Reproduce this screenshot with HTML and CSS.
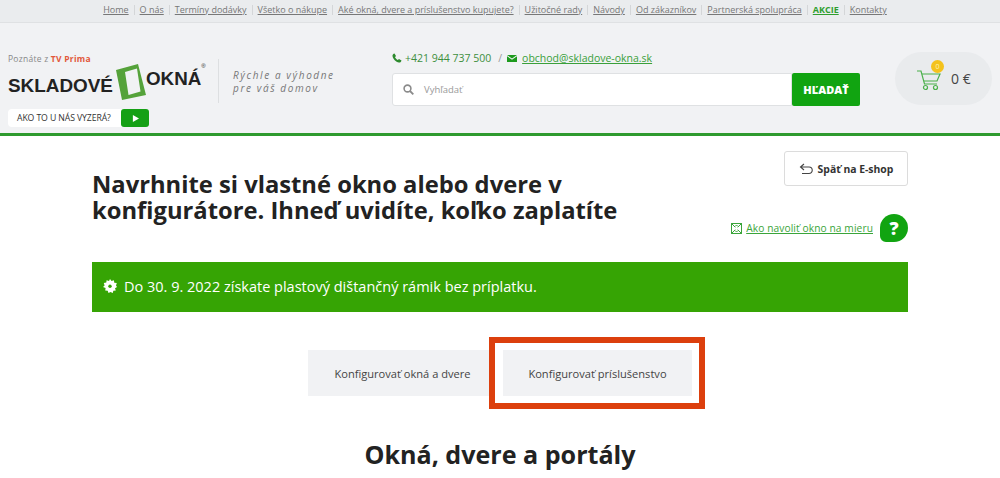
FILE: index.html
```html
<!DOCTYPE html>
<html lang="sk">
<head>
<meta charset="utf-8">
<title>Skladové okná</title>
<link rel="stylesheet" href="styles.css">
</head>
<body>
<nav class="topbar">
  <a href="#">Home</a><a href="#">O nás</a><a href="#">Termíny dodávky</a><a href="#">Všetko o nákupe</a><a href="#">Aké okná, dvere a príslušenstvo kupujete?</a><a href="#">Užitočné rady</a><a href="#">Návody</a><a href="#">Od zákazníkov</a><a href="#">Partnerská spolupráca</a><a href="#" class="akcie">AKCIE</a><a href="#">Kontakty</a>
</nav>
<header class="header">
  <div class="brand">
    <div class="known">Poznáte z <b>TV Prima</b></div>
    <div class="logo">
      <span class="logo-a">SKLADOVÉ</span>
      <svg class="logo-frame" width="30" height="36" viewBox="0 0 30 36"><path fill-rule="evenodd" d="M0 6 22 0 30 31 6 36Z M9 8 21 4.500 24.500 27.500 12.500 31Z" fill="#55a23a"/></svg>
      <span class="logo-b">OKNÁ<sup>®</sup></span>
    </div>
    <div class="video"><span class="video-label">AKO TO U NÁS VYZERÁ?</span><span class="video-play"><svg width="7" height="7" viewBox="0 0 8 8"><path d="M1 0 8 4 1 8Z" fill="#fff"/></svg></span></div>
  </div>
  <div class="slogan">Rýchle a výhodne<br>pre váš domov</div>
  <div class="contact">
    <div class="contact-row">
      <svg width="10" height="10" viewBox="0 0 10 10"><path d="M2.500.5 4 3 3 4.200C3.600 5.400 4.600 6.400 5.800 7L7 6l2.500 1.500C9.200 8.800 8.200 9.700 7 9.500 3.800 9 1 6.200.5 3 .3 1.800 1.200.8 2.500.5Z" fill="#2d8a2d"/></svg>
      <span class="phone">+421 944 737 500</span>
      <span class="slash">/</span>
      <svg width="10" height="7" viewBox="0 0 10 7"><path d="M0 0h10L5 3.500Z M0 1.200 5 4.800 10 1.200V7H0Z" fill="#1d9a1d"/></svg>
      <a href="#" class="mail">obchod@skladove-okna.sk</a>
    </div>
    <form class="search">
      <div class="search-field">
        <svg width="11" height="11" viewBox="0 0 11 11"><circle cx="4.500" cy="4.500" r="3.400" fill="none" stroke="#8b8b8b" stroke-width="1.600"/><path d="M7 7l3.300 3.300" stroke="#8b8b8b" stroke-width="1.800"/></svg>
        <span class="placeholder">Vyhľadať</span>
      </div>
      <button class="search-btn" type="button">HĽADAŤ</button>
    </form>
  </div>
  <div class="cart">
    <span class="cart-icon">
      <svg width="26" height="22" viewBox="0 0 26 22"><g fill="none" stroke="#4bb04b" stroke-width="1.200"><path d="M1 2h4l3.500 13H21"/><path d="M6 5h18l-3 7H8"/><circle cx="9.500" cy="18.500" r="2"/><circle cx="19.500" cy="18.500" r="2"/></g></svg>
      <span class="cart-badge">0</span>
    </span>
    <span class="cart-sum">0 €</span>
  </div>
</header>
<main class="main">
  <div class="title-row">
    <h1>Navrhnite si vlastné okno alebo dvere v konfigurátore. Ihneď uvidíte, koľko zaplatíte</h1>
    <div class="side">
      <a href="#" class="back">
        <svg width="14" height="12" viewBox="0 0 14 12"><path d="M5 1 1.500 4 5 7M1.500 4H10a3 3 0 0 1 0 6.500H3" fill="none" stroke="#444" stroke-width="1.100"/></svg>
        Späť na E-shop
      </a>
      <div class="help">
        <svg width="11" height="11" viewBox="0 0 11 11"><g fill="none" stroke="#3aa53a" stroke-width="1"><rect x=".5" y=".5" width="10" height="10"/><path d="M1 1l3.300 3.300M10 1 6.700 4.300M1 10l3.300-3.300M10 10 6.700 6.700M4 3.500 5.500 2 7 3.500M4 7.500 5.500 9 7 7.500"/></g></svg>
        <a href="#" class="help-link">Ako navoliť okno na mieru</a>
        <span class="help-bubble">?</span>
      </div>
    </div>
  </div>
  <div class="notice">
    <svg width="14" height="14" viewBox="0 0 14 14"><path d="M7 0l1.500 2 2.400-.8.400 2.500 2.500.4-.8 2.400L14 8l-2 1.300.8 2.200-2.500.3-.5 2.200L7.500 13 5.500 14l-.8-2.200-2.500-.2.400-2.500L0 8l1.600-1.600L.8 4l2.500-.4.300-2.400L6 2Z" fill="#fff"/><circle cx="7" cy="7.300" r="1.700" fill="#36a404"/></svg>
    Do 30. 9. 2022 získate plastový dištančný rámik bez príplatku.
  </div>
  <div class="tabs">
    <a href="#" class="tab tab-first">Konfigurovať okná a dvere</a>
    <div class="highlight"><a href="#" class="tab tab-second">Konfigurovať príslušenstvo</a></div>
  </div>
  <h2>Okná, dvere a portály</h2>
</main>
</body>
</html>
```
FILE: styles.css
```css
* { box-sizing: border-box; }
html, body { margin: 0; padding: 0; }
body { width: 1000px; height: 478px; overflow: hidden; background: #fff; font-family: "Open Sans", sans-serif; color: #222; }
a { color: inherit; }

.topbar { height: 23px; background: #eaecee; border-bottom: 1px solid #dfe1e3; display: flex; justify-content: center; align-items: center; padding: 0 10px 2px 0; font-size: 9px; color: #777; }
.topbar a { padding: 0 5px; border-right: 1px solid #d4d6d8; line-height: 10px; text-underline-offset: 1px; }
.topbar a:last-child { border-right: 0; }
.topbar .akcie { color: #2f9e2f; font-weight: 700; }

.header { height: 113px; background: #f1f2f4; border-bottom: 3px solid #2e9a2e; display: flex; position: relative; padding-left: 8px; }
.brand { width: 210px; padding-top: 31px; }
.known { font-size: 8.500px; line-height: 10px; color: #888; letter-spacing: .25px; }
.known b { color: #e2583a; }
.logo { display: flex; height: 36px; font-family: "Liberation Sans", sans-serif; font-weight: 700; color: #222; align-items: flex-start; }
.logo-a { font-size: 18.900px; line-height: 18px; margin-top: 13px; }
.logo-frame { margin-left: 3px; flex: none; }
.logo-b { font-size: 18.800px; line-height: 16px; margin-top: 7px; position: relative; }
.logo-b sup { font-size: 6px; position: absolute; top: -8px; left: 100%; line-height: 7px; font-weight: 400; }
.video { display: flex; width: 141px; height: 18px; margin-top: 9px; background: #fff; border-radius: 4px; align-items: center; font-size: 8.700px; letter-spacing: -.1px; color: #333; }
.video-label { width: 113px; padding-left: 9px; white-space: nowrap; }
.video-play { width: 28px; height: 18px; background: #15a015; border-radius: 3px; display: flex; align-items: center; justify-content: center; }

.slogan { width: 174px; height: 44px; margin-top: 36px; border-left: 1px solid #dddfe1; padding: 10px 0 0 14px; font-size: 10px; line-height: 13px; font-style: italic; letter-spacing: 1.600px; color: #777; }
.contact { width: 468px; padding-top: 28px; }
.contact-row { display: flex; align-items: center; height: 14px; font-size: 10.500px; color: #3d8f3d; gap: 3px; }
.phone { letter-spacing: 0; }
.slash { margin: 0 2px 0 4px; color: #999; }
.mail { color: #3aa03a; margin-left: 2px; }
.search { display: flex; width: 468px; height: 33px; margin-top: 8px; }
.search-field { width: 400px; background: #fff; border: 1px solid #dfe1e3; border-radius: 3px 0 0 3px; display: flex; align-items: center; padding-left: 10px; }
.placeholder { margin-left: 10px; font-size: 9.500px; color: #999; }
.search-btn { width: 68px; border: 0; border-radius: 2px; background: #11a411; color: #fff; font: 800 11px "Open Sans", sans-serif; padding: 0; }
.cart { width: 97px; height: 53px; margin: 29px 0 0 35px; background: #e9ebed; border-radius: 27px; display: flex; align-items: center; padding-left: 21px; }
.cart-icon { position: relative; width: 26px; height: 22px; margin-top: 2px; }
.cart-badge { position: absolute; top: -9px; right: -2px; width: 13px; height: 13px; border-radius: 50%; background: #f4c21c; color: #fff3b0; font-size: 7px; line-height: 13px; text-align: center; }
.cart-sum { margin-left: 9px; font-size: 14px; color: #444; }

.main { width: 816px; margin: 0 auto; }
.title-row { display: flex; justify-content: space-between; height: 126px; }
h1 { width: 540px; margin: 35px 0 0; font-size: 23.750px; line-height: 26px; font-weight: 700; color: #222; }
.side { display: flex; flex-direction: column; align-items: flex-end; padding-top: 15px; }
.back { display: flex; align-items: center; justify-content: center; gap: 5px; width: 124px; height: 35px; background: #fff; border: 1px solid #dcdcdc; border-radius: 3px; font-size: 10.400px; font-weight: 700; text-decoration: none; color: #333; }
.help { display: flex; align-items: center; height: 28px; margin-top: 28px; }
.help-link { margin: 0 7px 0 4px; font-size: 10.200px; color: #3aa53a; letter-spacing: .1px; }
.help-bubble { width: 28px; height: 28px; border-radius: 50% 50% 50% 6px; background: #11a411; color: #fff; font-size: 18px; font-weight: 800; line-height: 28px; text-align: center; }

.notice { height: 50px; background: #36a404; color: #fff; display: flex; align-items: center; gap: 7px; padding: 0 0 2px 11px; font-size: 14.500px; }

.tabs { display: flex; justify-content: center; margin-top: 25px; height: 72px; padding-left: 13px; }
.tab { display: flex; align-items: center; justify-content: center; background: #f1f2f4; font-size: 11.100px; color: #444; text-decoration: none; }
.tab-first { width: 181px; height: 46px; margin-top: 13px; padding-left: 8px; }
.highlight { width: 216px; height: 72px; border: 6px solid #dc3f0d; padding: 7px 7px 0 8px; }
.tab-second { width: 189px; height: 46px; }

h2 { margin: 27px 0 0; text-align: center; font-size: 25.100px; line-height: 36px; font-weight: 700; color: #222; }
```
